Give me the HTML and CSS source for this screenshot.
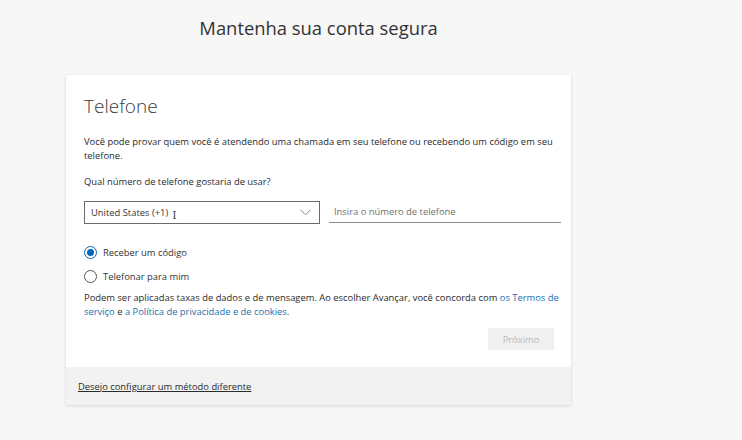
FILE: index.html
```html
<!DOCTYPE html>
<html lang="pt-BR">
<head>
<meta charset="utf-8">
<title>Mantenha sua conta segura</title>
<link rel="stylesheet" href="styles.css">
</head>
<body>
<div class="wrap">
  <h1 class="page-title">Mantenha sua conta segura</h1>
  <div class="card">
    <div class="card-body">
      <h2 class="card-title">Telefone</h2>
      <p class="text intro">Você pode provar quem você é atendendo uma chamada em seu telefone ou recebendo um código em seu telefone.</p>
      <p class="text question">Qual número de telefone gostaria de usar?</p>
      <div class="inputs">
        <div class="select">
          <span>United States (+1)</span>
          <span class="cursor">I</span>
          <svg class="chev" width="11" height="7" viewBox="0 0 11 7"><path d="M0.5 0.8 L5.5 5.8 L10.5 0.8" fill="none" stroke="#8a8a8a" stroke-width="1"/></svg>
        </div>
        <div class="phone">Insira o número de telefone</div>
      </div>
      <div class="radios">
        <label class="radio"><span class="dot on"></span>Receber um código</label>
        <label class="radio"><span class="dot"></span>Telefonar para mim</label>
      </div>
      <p class="text terms">Podem ser aplicadas taxas de dados e de mensagem. Ao escolher Avançar, você concorda com <a class="lnk">os Termos de serviço</a> e <a class="lnk">a Política de privacidade e de cookies</a>.</p>
      <div class="actions"><span class="btn">Próximo</span></div>
    </div>
    <div class="card-foot"><a class="foot-link">Desejo configurar um método diferente</a></div>
  </div>
</div>
</body>
</html>
```
FILE: styles.css
```css
html, body { margin: 0; padding: 0; }
body {
  background: #f7f7f7;
  font-family: "Open Sans", "Noto Sans", sans-serif;
  color: #262626;
  width: 742px;
  height: 440px;
  overflow: hidden;
}
.wrap {
  margin-left: 66px;
  width: 505px;
  display: flex;
  flex-direction: column;
}
.page-title {
  margin: 15px 0 0;
  text-align: center;
  font-weight: 400;
  font-size: 18.4px;
  line-height: 26px;
  color: #333;
}
.card {
  margin-top: 34px;
  background: #fff;
  box-shadow: 0 1px 3px rgba(0,0,0,0.12), 0 0 1px rgba(0,0,0,0.08);
}
.card-body {
  padding: 18px 10px 17px 18px;
}
.card-title {
  margin: 0;
  font-weight: 300;
  font-size: 19px;
  line-height: 26px;
  color: #3a3a3a;
}
.text {
  margin: 0;
  font-size: 9.4px;
  line-height: 14px;
  color: #2b2b2b;
}
.intro { margin-top: 16px; margin-right: 8px; }
.question { margin-top: 12px; }
.inputs {
  margin-top: 12px;
  display: flex;
  gap: 9px;
}
.select {
  width: 236px;
  height: 23px;
  box-sizing: border-box;
  border: 1px solid #6b6b6b;
  display: flex;
  align-items: center;
  padding: 0 8px 0 6px;
  font-size: 9.4px;
  color: #333;
}
.cursor {
  margin-left: 4px;
  font-family: "DejaVu Serif", serif;
  font-size: 11px;
  color: #444;
  line-height: 1;
  margin-top: 5px;
}
.chev { margin-left: auto; }
.phone {
  flex: 1;
  height: 22px;
  box-sizing: border-box;
  border-bottom: 1px solid #8f8f8f;
  display: flex;
  align-items: center;
  padding-left: 5px;
  font-size: 9.4px;
  color: #707070;
}
.radios {
  margin-top: 21px;
  display: flex;
  flex-direction: column;
  gap: 10px;
}
.radio {
  display: flex;
  align-items: center;
  gap: 6px;
  font-size: 9.4px;
  color: #333;
  height: 14px;
}
.dot {
  width: 13px;
  height: 13px;
  box-sizing: border-box;
  border: 1px solid #555;
  border-radius: 50%;
  display: flex;
  align-items: center;
  justify-content: center;
}
.dot.on { border-color: #0067b8; }
.dot.on::after {
  content: "";
  width: 7px;
  height: 7px;
  border-radius: 50%;
  background: #0067b8;
}
.terms { margin-top: 8px; }
.lnk { color: #1b6fad; text-decoration: none; }
.actions {
  margin-top: 9px;
  display: flex;
  justify-content: flex-end;
  padding-right: 7px;
}
.btn {
  width: 66px;
  height: 22px;
  background: #f0f0f0;
  color: #b9b9b9;
  font-size: 9.4px;
  display: flex;
  align-items: center;
  justify-content: center;
}
.card-foot {
  background: #f2f2f2;
  height: 38px;
  display: flex;
  align-items: center;
  padding-left: 12px;
}
.foot-link {
  font-size: 9.4px;
  color: #2b2b2b;
  text-decoration: underline;
}
```
